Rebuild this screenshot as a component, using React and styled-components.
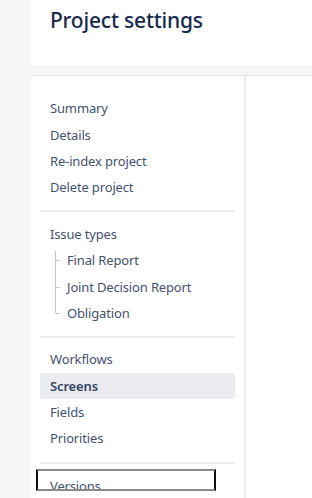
import React from "react";
import styled, { createGlobalStyle } from "styled-components";

const Global = createGlobalStyle`
  html, body { margin: 0; padding: 0; background: #f4f5f7; }
  body { font-family: "Noto Sans", "Open Sans", sans-serif; overflow: hidden; }
  * { box-sizing: border-box; }
`;

const Page = styled.div`
  width: 312px;
  height: 498px;
  padding-left: 31px;
  display: flex;
  flex-direction: column;
  background: #f4f5f7;
  overflow: hidden;
`;

const Header = styled.header`
  flex: 0 0 65px;
  background: #fff;
  padding: 6px 0 0 19px;
`;

const Title = styled.h1`
  margin: 0;
  font-size: 21px;
  font-weight: 500;
  line-height: 28px;
  color: #172b4d;
  letter-spacing: -0.2px;
`;

const Body = styled.div`
  margin-top: 10px;
  flex: 1 1 auto;
  min-height: 0;
  display: flex;
  background: #fff;
  border-top: 1px solid #dfe1e6;
`;

const Sidebar = styled.nav`
  flex: 0 0 215px;
  border-right: 2px solid #ebecf0;
  padding: 19px 9px 0 9px;
`;

const Main = styled.main`
  flex: 1;
`;

const Group = styled.ul`
  list-style: none;
  margin: 0;
  padding: ${(p) => p.$top || 0}px 0 ${(p) => p.$bottom || 0}px 0;
  border-bottom: ${(p) => (p.$divider ? "2px solid #ebecf0" : "none")};
`;

const Item = styled.li`
  position: relative;
  height: 26.4px;
  display: flex;
  align-items: center;
  padding-left: ${(p) => (p.$child ? 27 : 10)}px;
  font-size: 13px;
  letter-spacing: -0.15px;
  color: ${(p) => (p.$active ? "#344563" : "#42526e")};
  font-weight: ${(p) => (p.$active ? 600 : 400)};
  background: ${(p) => (p.$active ? "#ebecf0" : "transparent")};
  border-radius: 3px;
  white-space: nowrap;
`;

const Tree = styled.span`
  position: absolute;
  left: 15px;
  top: ${(p) => (p.$first ? "4px" : "0")};
  bottom: ${(p) => (p.$last ? "50%" : "0")};
  width: 5px;
  border-left: 1px solid #c1c7d0;
  &::after {
    content: "";
    position: absolute;
    left: 0;
    top: ${(p) => (p.$last ? "100%" : p.$first ? "calc(50% - 2px)" : "50%")};
    width: 4px;
    border-top: 1px solid #c1c7d0;
  }
`;

const FocusBox = styled.span`
  position: absolute;
  left: -4px;
  top: -4px;
  width: 180px;
  height: 22px;
  border-top: 2px solid #8a8a8a;
  border-bottom: 2px solid #8a8a8a;
  border-left: 2px solid #111;
  border-right: 2px solid #111;
  pointer-events: none;
`;

export default function App() {
  return (
    <>
      <Global />
      <Page>
        <Header>
          <Title>Project settings</Title>
        </Header>
        <Body>
          <Sidebar>
            <Group $bottom={9} $divider>
              <Item>Summary</Item>
              <Item>Details</Item>
              <Item>Re-index project</Item>
              <Item>Delete project</Item>
            </Group>
            <Group $top={9} $bottom={10} $divider>
              <Item>Issue types</Item>
              <Item $child>
                <Tree $first />
                Final Report
              </Item>
              <Item $child>
                <Tree />
                Joint Decision Report
              </Item>
              <Item $child>
                <Tree $last />
                Obligation
              </Item>
            </Group>
            <Group $top={8} $bottom={10} $divider>
              <Item>Workflows</Item>
              <Item $active>Screens</Item>
              <Item>Fields</Item>
              <Item>Priorities</Item>
            </Group>
            <Group $top={9}>
              <Item>
                <FocusBox />
                Versions
              </Item>
            </Group>
          </Sidebar>
          <Main />
        </Body>
      </Page>
    </>
  );
}
